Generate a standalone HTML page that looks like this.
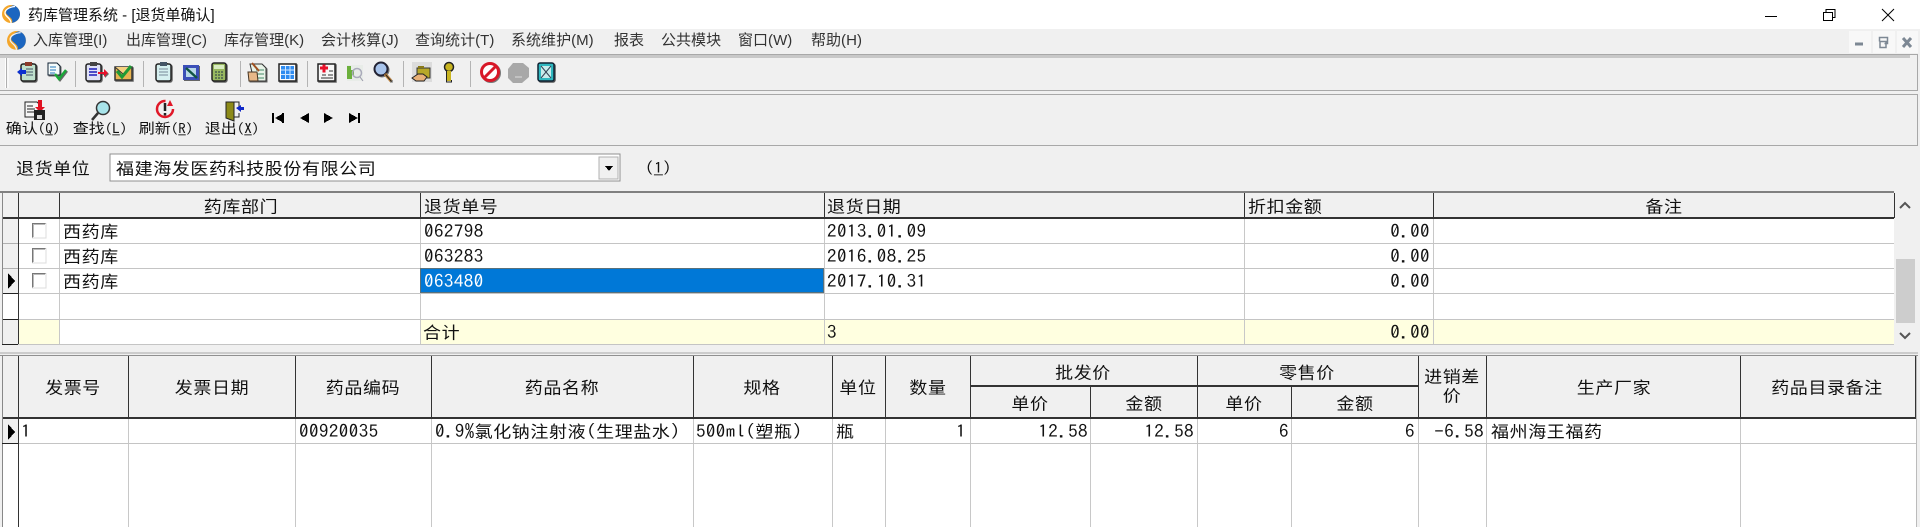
<!DOCTYPE html>
<html lang="zh"><head><meta charset="utf-8"><title>药库管理系统</title>
<style>
html,body{margin:0;padding:0;width:1920px;height:527px;overflow:hidden;background:#f0f0f0}
#p{position:relative;width:1920px;height:527px;overflow:hidden;filter:blur(.3px)}
svg{position:absolute;left:0;top:0}
.t{position:absolute;white-space:nowrap;line-height:20px;height:20px;font-family:"Liberation Sans","WenQuanYi Zen Hei","Noto Sans CJK SC",sans-serif;font-size:18px;letter-spacing:.6px;color:#111;transform:scaleY(.9);transform-origin:50% 50%}
.t b{font-family:"IPAGothic","Liberation Mono",monospace;font-weight:normal;font-size:19px;letter-spacing:.4px}
.c{transform:translateX(-50%) scaleY(.9)}
.r{text-align:right;margin-right:-1px}
.n{font-family:"IPAGothic","Liberation Mono",monospace;font-size:19px;letter-spacing:.45px}
.w{font-size:15px;letter-spacing:0;color:#111;font-family:"Liberation Sans","Noto Sans CJK SC",sans-serif;transform:none}
.m{font-size:15px;letter-spacing:.03px;color:#333;font-family:"Liberation Sans","Noto Sans CJK SC",sans-serif;transform:none}
.l{letter-spacing:0}
.l b{font-size:15px;letter-spacing:0}
</style></head><body><div id="p">
<svg width="1920" height="527" viewBox="0 0 1920 527" shape-rendering="crispEdges">
<rect width="1920" height="29" fill="#fff"/>
<rect x="1849" y="31" width="22" height="22" fill="#f8f8f8"/><rect x="1873" y="31" width="22" height="22" fill="#f8f8f8"/><rect x="1897" y="31" width="21" height="22" fill="#f8f8f8"/>
<!-- bands -->
<path d="M0 54.5H1918M1917.5 54V91M0 90.5H1918" stroke="#a8a8a8" fill="none"/>
<rect x="0" y="55" width="1910" height="3" fill="#c8c8c8"/>
<path d="M0 94.5H1918M1917.5 94V145M0 145.5H1918" stroke="#a8a8a8" fill="none"/>
<!-- grip -->
<path d="M5.5 58V88M8 58V88" stroke="#fff"/><path d="M6.5 58V88" stroke="#b0b0b0"/>
<path d="M75.5 61V87M143.5 61V87M240.5 61V87M307.5 61V87M403.5 61V87M470.5 61V87" stroke="#b4b4b4" stroke-width="1"/>
<!-- combo -->
<rect x="110" y="154" width="510" height="27" fill="#fff" stroke="#909090"/>
<rect x="599" y="157" width="19" height="22" fill="#f0f0f0" stroke="#b0b0b0"/>
<path d="M605 166h8l-4 5z" fill="#000"/>
<!-- grid 1 -->
<rect x="2" y="192" width="1892" height="152" fill="#fff"/>
<rect x="2" y="193" width="1892" height="25" fill="#f0f0f0"/>
<rect x="18" y="319" width="1876" height="25" fill="#ffffe0"/>
<rect x="59" y="319" width="361" height="25" fill="#fff"/>
<rect x="2" y="218" width="16" height="75" fill="#f0f0f0"/>
<rect x="2" y="319" width="16" height="25" fill="#f0f0f0"/>
<path d="M59.5 218V344M420.5 218V344M824.5 218V344M1244.5 218V344M1433.5 218V344" stroke="#c8c8c8" fill="none"/>
<path d="M18 243.5H1894M18 268.5H1894M18 293.5H1894M18 319.5H1894M2 344.5H1894" stroke="#c4c4c4" fill="none"/>
<path d="M2 243.5H18M2 268.5H18" stroke="#b0b0b0"/>
<path d="M0 192H1894" stroke="#808080" stroke-width="2"/>
<path d="M2 218H1894" stroke="#333" stroke-width="2"/>
<path d="M2 293.5H18M2 319.5H18M2 344.5H18" stroke="#222"/>
<path d="M18.5 193V344M59.5 193V218M420.5 193V218M824.5 193V218M1244.5 193V218M1433.5 193V218M1894.5 193V218" stroke="#333" fill="none"/>
<path d="M2.5 193V344" stroke="#888"/>
<rect x="420" y="268" width="404" height="25" fill="#0078d7"/>
<rect x="420.5" y="268.5" width="403" height="24" fill="none" stroke="#b06a20" stroke-dasharray="1 1"/>
<!-- checkboxes -->
<path d="M32 223h14v15H32z" fill="#fff"/><path d="M32 248h14v15H32z" fill="#fff"/><path d="M32 273h14v15H32z" fill="#fff"/>
<path d="M32.5 238V223.5H46M32.5 263V248.5H46M32.5 288V273.5H46" fill="none" stroke="#777"/>
<path d="M33.5 237V224.5H45M33.5 262V249.5H45M33.5 287V274.5H45" fill="none" stroke="#bbb"/>
<path d="M46 223V238H32M46 248V263H32M46 273V288H32" fill="none" stroke="#ddd"/>
<path d="M8 273v16l7-8z" fill="#000"/>
<!-- scrollbar -->
<rect x="1896" y="259" width="19" height="64" fill="#cdcdcd"/>
<path d="M1900 208l5-5 5 5M1900 333l5 5 5-5" fill="none" stroke="#555" stroke-width="2" shape-rendering="auto"/>
<path d="M0 353H1918" stroke="#a8a8a8" stroke-width="1"/>
<!-- grid 2 -->
<rect x="2" y="355" width="1915" height="172" fill="#fff"/>
<rect x="2" y="356" width="1914" height="62" fill="#f0f0f0"/>
<rect x="2" y="418" width="16" height="25" fill="#f0f0f0"/>
<path d="M128.5 418V527M295.5 418V527M431.5 418V527M693.5 418V527M832.5 418V527M885.5 418V527M970.5 418V527M1090.5 418V527M1197.5 418V527M1291.5 418V527M1418.5 418V527M1486.5 418V527M1740.5 418V527" stroke="#c8c8c8" fill="none"/>
<path d="M18 443.5H1916" stroke="#c4c4c4"/>
<path d="M0 355.5H1918" stroke="#909090" stroke-width="1"/>
<path d="M2 418H1916" stroke="#333" stroke-width="2"/>
<path d="M970 386H1418" stroke="#333" stroke-width="2"/>
<path d="M18.5 356V527M128.5 356V418M295.5 356V418M431.5 356V418M693.5 356V418M832.5 356V418M885.5 356V418M970.5 356V418M1197.5 356V418M1418.5 356V418M1486.5 356V418M1740.5 356V418M1915.5 356V418M1090.5 386V418M1291.5 386V418" stroke="#333" fill="none"/>
<path d="M2.5 356V527" stroke="#888"/><path d="M1916.5 356V527" stroke="#bbb"/>
<path d="M2 443.5H18" stroke="#222"/>
<path d="M8 424v16l7-8z" fill="#000"/>
<!-- nav -->
<path d="M273 113v10M283 113v10" stroke="#000" stroke-width="2"/><path d="M284 113v10l-9-5zM309 113v10l-9-5zM324 113v10l9-5zM349 113v10l9-5z" fill="#000"/>
<path d="M359 113v10" stroke="#000" stroke-width="2"/>
</svg>

<!-- window controls & logos -->
<svg width="1920" height="527" viewBox="0 0 1920 527" fill="none">
<defs><clipPath id="o"><ellipse cx="9" cy="9" rx="9" ry="9"/></clipPath></defs>
<path d="M1765 16.5H1777" stroke="#000"/>
<path d="M1823.5 12.5h9v8h-9zM1826 12.5v-3h9v8h-2.5" stroke="#000"/>
<path d="M1882 9l12 12M1894 9l-12 12" stroke="#000"/>
<path d="M1855 44h8" stroke="#7d8894" stroke-width="3"/>
<path d="M1879.5 41.5v-4h8v6h-3M1880 41.5h6v6h-6z" stroke="#7d8894" stroke-width="1.5"/>
<path d="M1903 38l8 9M1911 38l-8 9" stroke="#7d8894" stroke-width="3"/>
<g transform="translate(2,5)"><g clip-path="url(#o)"><rect width="18" height="18" fill="#f4a62a"/><path d="M12 0H18V11C17 15 14 17 10 18C12 13 5 11 4 8C4 4 8 1 12 0z" fill="#1c66c0"/><path d="M13 1.5C7 2 2.500 5 3 8.500C3.500 12 9 13 9 18" stroke="#fff" stroke-width="1.300"/></g></g>
<g transform="translate(7,31) scale(1.050,1.050)"><g clip-path="url(#o)"><rect width="18" height="18" fill="#f4a62a"/><path d="M12 0H18V11C17 15 14 17 10 18C12 13 5 11 4 8C4 4 8 1 12 0z" fill="#1c66c0"/><path d="M13 1.500C7 2 2.500 5 3 8.500C3.500 12 9 13 9 18" stroke="#eef2f6" stroke-width="1.200"/></g></g>

<!-- toolbar 1 -->
<g style="filter:drop-shadow(1px 1px 0 #666)">
<rect x="21" y="64" width="15" height="17" rx="2" fill="#bfe0cc" stroke="#222" stroke-width="1.5"/><rect x="25" y="62" width="7" height="4" fill="#8b3a2a"/><path d="M26 69h7M26 72h7M26 75h7" stroke="#456"/><path d="M17 72l5-4v8z" fill="#0b2fd0"/><rect x="20" y="70" width="6" height="4" fill="#0b2fd0"/>
<path d="M48 63h9l3 3v9H48z" fill="#f4fbfb" stroke="#123"/><path d="M50 67h6M50 70h6M50 73h5" stroke="#27b"/><path d="M55 74l4 5 7-9" stroke="#1aa838" stroke-width="2.5"/>
<rect x="86" y="64" width="15" height="17" rx="2" fill="#dfe2f6" stroke="#222" stroke-width="1.5"/><rect x="90" y="62" width="7" height="4" fill="#444"/><path d="M89 69h8M89 72h8M89 75h8" stroke="#1b1bb8" stroke-width="1.5"/><path d="M98 72h6v-3l4 4-4 4v-3h-6z" fill="#e8102a"/>
<path d="M115 67h17v13h-17z" fill="#e8b450" stroke="#333" stroke-width="1.5"/><path d="M115 67l8 7 9-7" fill="#f4d080" stroke="#333"/><path d="M117 71l5 6 9-11" stroke="#1f9a35" stroke-width="3"/>
<rect x="156" y="64" width="15" height="17" rx="2" fill="#d6f0f0" stroke="#222" stroke-width="1.5"/><rect x="160" y="62" width="7" height="4" fill="#456"/><path d="M159 69h9M159 72h9M159 75h9" stroke="#789"/>
<rect x="183" y="65" width="16" height="15" fill="#3b4fb8"/><rect x="186" y="68" width="10" height="9" fill="#b8d8e8"/><path d="M186 68l11 10" stroke="#154" stroke-width="2.5"/>
<rect x="212" y="63" width="14" height="18" rx="2" fill="#98b860" stroke="#222" stroke-width="1.5"/><rect x="214" y="65" width="10" height="4" fill="#d8ecc0"/><path d="M215 72h8M215 75h8M215 78h8" stroke="#234" stroke-dasharray="2 1"/>
<path d="M250 64h12l4 4v13h-12z" fill="#e8f3e8" stroke="#333"/><path d="M256 70h8M256 74h8M256 78h8" stroke="#486"/><path d="M248 72l9 0 1 9h-9z" fill="#e8b888" stroke="#432"/><path d="M252 63l7 8" stroke="#a05020" stroke-width="2"/>
<rect x="279" y="64" width="17" height="17" fill="#fff" stroke="#222" stroke-width="1.5"/><path d="M281 66h13v13h-13z" fill="#2f8cf0"/><path d="M285.5 66v13M290 66v13M281 70h13M281 74.5h13" stroke="#cfe6ff"/>
<path d="M318 64h17v17h-17z" fill="#f6f6f6" stroke="#222" stroke-width="1.5"/><path d="M320 68h8M324 64.5v8" stroke="#e8102a" stroke-width="3"/><path d="M322 75h4M328 75h5M321 78h12M329 71h4" stroke="#333"/>
</g>
<rect x="347" y="65" width="16" height="16" fill="#e8ece8"/><path d="M347 66h4v4h3v5h-2v4h-5z" fill="#6cb03c"/><circle cx="357" cy="73" r="4.5" stroke="#aab" stroke-width="1.5"/><path d="M360 77l3 4" stroke="#99a"/>
<g style="filter:drop-shadow(1px 1px 0 #777)">
<circle cx="381" cy="69" r="6.5" fill="#a8c4ec" stroke="#223" stroke-width="2"/><path d="M385 74l6 7" stroke="#c88a40" stroke-width="3"/><path d="M385.5 74.5l6 7" stroke="#222" stroke-width="1"/>
</g>
<rect x="412" y="62" width="20" height="20" fill="#dcdcdc"/><path d="M417 68h13v10h-13z" fill="#b8a828" stroke="#333"/><path d="M418 66h6v2h-6z" fill="#8a7a18"/><path d="M412 78l6-4h5l4 3-3 4h-8z" fill="#e8b078" stroke="#222"/>
<circle cx="449" cy="67" r="4.500" fill="#c8b420" stroke="#222" stroke-width="1.5"/><path d="M449 71v10" stroke="#c8b420" stroke-width="4"/><path d="M446.5 71v11h5v-2" stroke="#222"/>
<g style="filter:drop-shadow(1px 1px 0 #777)"><circle cx="490" cy="72" r="8.5" fill="#fff" stroke="#d81828" stroke-width="3"/><path d="M484 78l12-12" stroke="#d81828" stroke-width="3"/></g>
<path d="M513 63h10l6 5v9l-7 6h-9l-5-5v-9z" fill="#a8a8a8"/><path d="M515 77h7" stroke="#ddd"/>
<g style="filter:drop-shadow(1px 1px 0 #555)"><rect x="538" y="63" width="16" height="18" rx="2" fill="#2fb8c0" stroke="#123" stroke-width="1.5"/><rect x="541" y="66" width="10" height="12" fill="#c8ecec"/><path d="M541 66l10 12M551 66l-10 12" stroke="#345"/></g>

<!-- toolbar 2 -->
<path d="M25 102h12l3 3v12H25z" fill="#f6f6f6" stroke="#222"/><path d="M27 106h6M27 109h8M27 112h7" stroke="#222"/>
<path d="M38 100v7h-3l5 5 5-5h-3v-7z" fill="#e01020"/><rect x="34" y="110" width="11" height="10" fill="#222"/><rect x="37" y="115" width="5" height="4" fill="#ddd"/>
<circle cx="103" cy="108" r="6.5" fill="#a8e4ea" stroke="#333" stroke-width="1.5"/><path d="M98 113l-6 7" stroke="#333" stroke-width="2.5"/>
<circle cx="165" cy="109" r="8" stroke="#e01828" stroke-width="2.5" stroke-dasharray="38 12"/><path d="M170 100l3 6-6 0z" fill="#e01828"/><path d="M165 103v8M165 113v2.5" stroke="#222" stroke-width="2.5"/>
<path d="M226 102h8v19l-8-3z" fill="#8c8a18" stroke="#222"/><path d="M234 102h5v5M239 113v4h-5" stroke="#222"/><path d="M236 108l5-3v2h3v3h-3v2z" fill="#1028c8"/>
</svg>

<!-- title and menu -->
<span class="t w" style="left:28px;top:6px">药库管理系统 - [退货单确认]</span>
<span class="t m" style="left:33px;top:31px">入库管理(I)</span>
<span class="t m" style="left:126px;top:31px">出库管理(C)</span>
<span class="t m" style="left:224px;top:31px">库存管理(K)</span>
<span class="t m" style="left:321px;top:31px">会计核算(J)</span>
<span class="t m" style="left:415px;top:31px">查询统计(T)</span>
<span class="t m" style="left:511px;top:31px">系统维护(M)</span>
<span class="t m" style="left:614px;top:31px">报表</span>
<span class="t m" style="left:661px;top:31px">公共模块</span>
<span class="t m" style="left:738px;top:31px">窗口(W)</span>
<span class="t m" style="left:811px;top:31px">帮助(H)</span>

<!-- toolbar labels -->
<span class="t c l" style="left:33px;top:119px;font-size:16px">确认<b>(<u>Q</u>)</b></span>
<span class="t c l" style="left:100px;top:119px;font-size:16px">查找<b>(<u>L</u>)</b></span>
<span class="t c l" style="left:166px;top:119px;font-size:16px">刷新<b>(<u>R</u>)</b></span>
<span class="t c l" style="left:232px;top:119px;font-size:16px">退出<b>(<u>X</u>)</b></span>

<span class="t" style="left:16px;top:159px">退货单位</span>
<span class="t" style="left:116px;top:159px">福建海发医药科技股份有限公司</span>
<span class="t n" style="left:645px;top:159px;font-size:17px">(<u>1</u>)</span>

<!-- grid 1 -->
<span class="t c" style="left:241px;top:197px">药库部门</span>
<span class="t" style="left:424px;top:197px">退货单号</span>
<span class="t" style="left:827px;top:197px">退货日期</span>
<span class="t" style="left:1248px;top:197px">折扣金额</span>
<span class="t c" style="left:1664px;top:197px">备注</span>
<span class="t" style="left:63px;top:222px">西药库</span>
<span class="t" style="left:63px;top:247px">西药库</span>
<span class="t" style="left:63px;top:272px">西药库</span>
<span class="t n" style="left:424px;top:222px">062798</span>
<span class="t n" style="left:424px;top:247px">063283</span>
<span class="t n" style="left:424px;top:272px;color:#fff">063480</span>
<span class="t" style="left:423px;top:323px">合计</span>
<span class="t n" style="left:827px;top:222px">2013.01.09</span>
<span class="t n" style="left:827px;top:247px">2016.08.25</span>
<span class="t n" style="left:827px;top:272px">2017.10.31</span>
<span class="t n" style="left:827px;top:323px">3</span>
<span class="t n r" style="right:491px;top:222px">0.00</span>
<span class="t n r" style="right:491px;top:247px">0.00</span>
<span class="t n r" style="right:491px;top:272px">0.00</span>
<span class="t n r" style="right:491px;top:323px">0.00</span>

<!-- grid 2 header -->
<span class="t c" style="left:73px;top:378px">发票号</span>
<span class="t c" style="left:212px;top:378px">发票日期</span>
<span class="t c" style="left:363px;top:378px">药品编码</span>
<span class="t c" style="left:562px;top:378px">药品名称</span>
<span class="t c" style="left:762px;top:378px">规格</span>
<span class="t c" style="left:858px;top:378px">单位</span>
<span class="t c" style="left:928px;top:378px">数量</span>
<span class="t c" style="left:1083px;top:363px">批发价</span>
<span class="t c" style="left:1030px;top:394px">单价</span>
<span class="t c" style="left:1144px;top:394px">金额</span>
<span class="t c" style="left:1307px;top:363px">零售价</span>
<span class="t c" style="left:1244px;top:394px">单价</span>
<span class="t c" style="left:1355px;top:394px">金额</span>
<span class="t c" style="left:1452px;top:367px">进销差</span>
<span class="t c" style="left:1452px;top:386px">价</span>
<span class="t c" style="left:1614px;top:378px">生产厂家</span>
<span class="t c" style="left:1827px;top:378px">药品目录备注</span>

<!-- grid 2 row -->
<span class="t n" style="left:21px;top:422px">1</span>
<span class="t n" style="left:299px;top:422px">00920035</span>
<span class="t" style="left:435px;top:422px"><b>0.9%</b>氯化钠注射液<b>(</b>生理盐水<b>)</b></span>
<span class="t" style="left:696px;top:422px"><b>500ml(</b>塑瓶<b>)</b></span>
<span class="t" style="left:836px;top:422px">瓶</span>
<span class="t n r" style="right:955px;top:422px">1</span>
<span class="t n r" style="right:833px;top:422px">12.58</span>
<span class="t n r" style="right:727px;top:422px">12.58</span>
<span class="t n r" style="right:632px;top:422px">6</span>
<span class="t n r" style="right:506px;top:422px">6</span>
<span class="t n r" style="right:437px;top:422px">-6.58</span>
<span class="t" style="left:1491px;top:422px">福州海王福药</span>
</div></body></html>
